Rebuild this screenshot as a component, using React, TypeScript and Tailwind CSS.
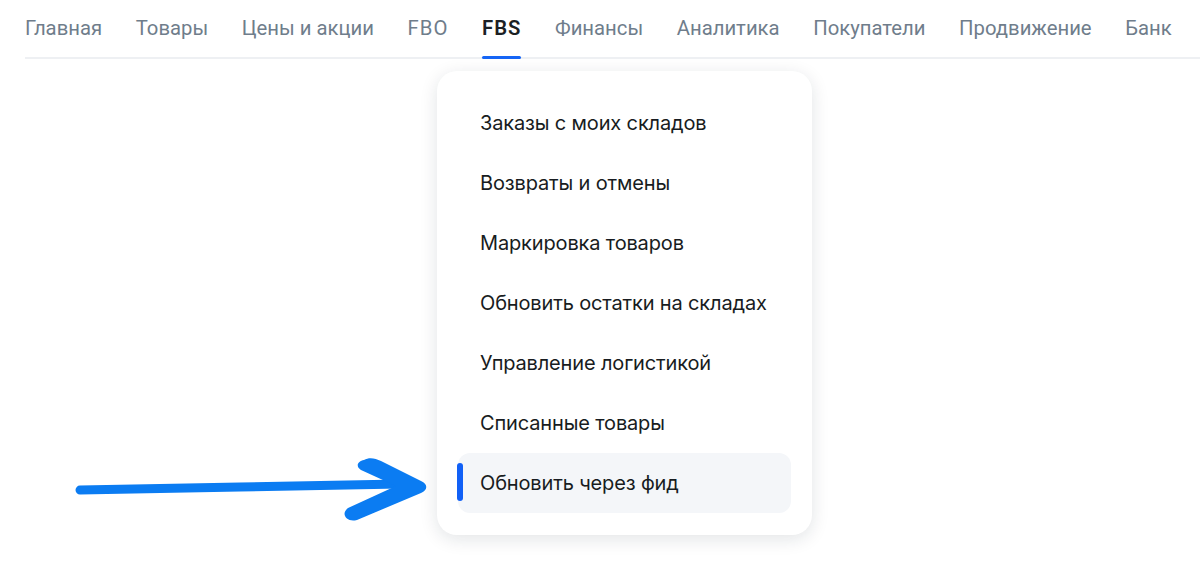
import React from "react";

const tabs = ["Главная", "Товары", "Цены и акции", "FBO", "FBS", "Финансы", "Аналитика", "Покупатели", "Продвижение", "Банк"];

const menuItems = [
  "Заказы с моих складов",
  "Возвраты и отмены",
  "Маркировка товаров",
  "Обновить остатки на складах",
  "Управление логистикой",
  "Списанные товары",
  "Обновить через фид",
];

function HandArrow() {
  return (
    <svg className="absolute left-0 top-0" width="440" height="573" viewBox="0 0 440 573" fill="none">
      <path d="M80 490 C 180 488, 300 486, 400 484" stroke="#0b7cf2" strokeWidth="9" strokeLinecap="round" />
      <path
        d="M364 460 C 369 457, 375 458, 381 461 L 421 481 C 428 484, 428 490, 421 493 L 357 520 C 347 523, 340 514, 348 508 L 396 486 L 361 470 C 355 466, 358 461, 364 460 Z"
        fill="#0b7cf2"
      />
    </svg>
  );
}

export default function App() {
  return (
    <div className="relative h-[573px] w-[1200px] overflow-hidden bg-white" style={{ fontFamily: "Roboto, 'Liberation Sans', sans-serif" }}>
      <nav className="ml-[25px] flex h-[59px] items-stretch border-b-2 border-[#eef0f3]">
        {tabs.map((tab) => {
          const active = tab === "FBS";
          const latin = tab === "FBO" || tab === "FBS";
          return (
            <div key={tab} className="relative mr-[33.6px] flex shrink-0 items-start pt-[15px]">
              <span
                className={`whitespace-nowrap text-[20.3px] leading-[27px] ${latin ? "tracking-[1px]" : ""} ${active ? "font-semibold text-[#1b1f24]" : "text-[#6f7d8b]"}`}
              >
                {tab}
              </span>
              {active ? <div className="absolute -bottom-[2px] left-0 right-0 h-[3px] rounded-full bg-[#1565f5]" /> : null}
            </div>
          );
        })}
      </nav>

      <div
        className="absolute left-[437px] top-[71px] w-[375px] rounded-[20px] bg-white px-[21px] py-[22px] shadow-[0_4px_18px_rgba(20,30,50,0.12)]"
        style={{ fontFamily: "Inter, 'Noto Sans', sans-serif" }}
      >
        {menuItems.map((item, i) => {
          const active = i === menuItems.length - 1;
          return (
            <div
              key={item}
              className={`relative flex h-[60px] items-center rounded-[12px] pl-[22px] text-[20px] tracking-[-0.15px] text-[#181c21] ${active ? "bg-[#f4f6f9]" : ""}`}
            >
              {active ? <span className="absolute -left-[1px] top-[10px] h-[38px] w-[6px] rounded-full bg-[#1160f6]" /> : null}
              {item}
            </div>
          );
        })}
      </div>

      <HandArrow />
    </div>
  );
}
